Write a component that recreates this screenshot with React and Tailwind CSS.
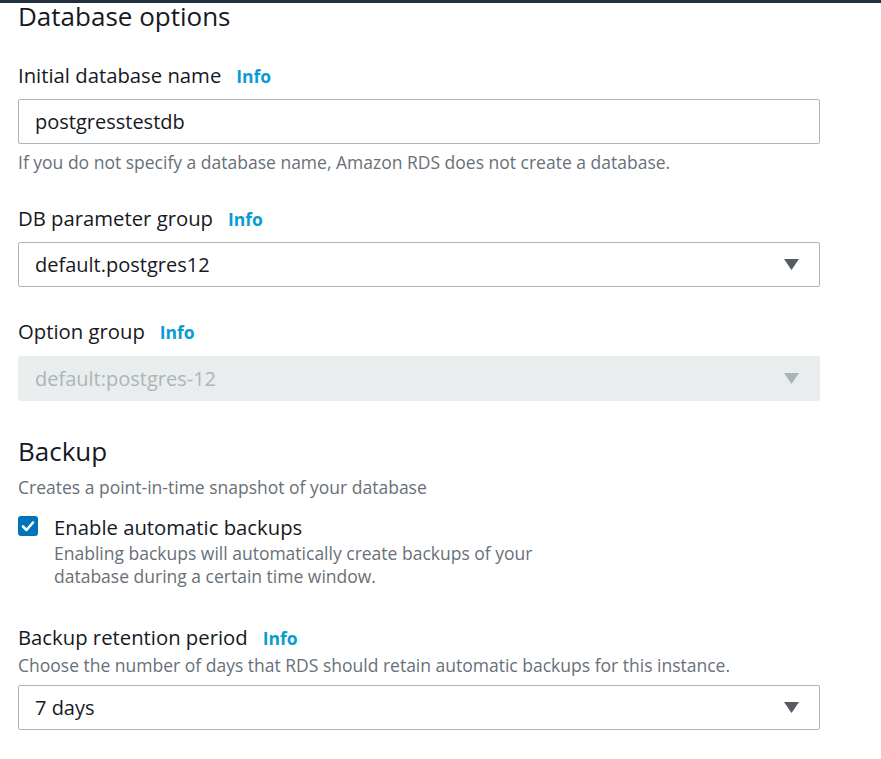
import React from 'react';

const font = { fontFamily: '"Open Sans", "Noto Sans", Arial, sans-serif' };

function Info() {
  return <span className="ml-[15px] text-[17.5px] font-bold text-[#0a9bd3]">Info</span>;
}

function Label({ children, className = '' }) {
  return (
    <div className={`flex items-baseline text-[20.3px] leading-[24px] text-[#16191f] ${className}`}>
      <span>{children}</span>
      <Info />
    </div>
  );
}

function Caret({ disabled }) {
  return (
    <svg width="15" height="11" viewBox="0 0 15 11" className="shrink-0">
      <path d="M0 0 H15 L7.5 11 Z" fill={disabled ? '#a9b4b6' : '#545b64'} />
    </svg>
  );
}

function Select({ value, disabled }) {
  return (
    <div
      className={`flex h-[45px] items-center justify-between rounded-[2px] border pl-[16px] pr-[20px] text-[20px] ${
        disabled
          ? 'border-[#eaeded] bg-[#eaeded] text-[#aab7b8]'
          : 'border-[#aab7b8] bg-white text-[#16191f]'
      }`}
    >
      <span>{value}</span>
      <Caret disabled={disabled} />
    </div>
  );
}

export default function App() {
  return (
    <div className="min-h-[759px] w-[881px] bg-white" style={font}>
      <div className="h-[3px] bg-[#232f3e]" />
      <div className="w-[820px] pl-[18px]">
        <h2 className="-mt-[2px] text-[26px] leading-[30px] text-[#16191f]">Database options</h2>

        <Label className="mt-[32px]">Initial database name</Label>
        <div className="mt-[11px] flex h-[45px] items-center rounded-[2px] border border-[#aab7b8] pl-[16px] text-[20px] text-[#16191f]">
          postgresstestdb
        </div>
        <p className="mt-[6px] text-[17.5px] leading-[24px] text-[#687078]">
          If you do not specify a database name, Amazon RDS does not create a database.
        </p>

        <Label className="mt-[32px]">DB parameter group</Label>
        <div className="mt-[11px]">
          <Select value="default.postgres12" />
        </div>

        <Label className="mt-[32px]">Option group</Label>
        <div className="mt-[12px]">
          <Select value="default:postgres-12" disabled />
        </div>

        <h2 className="mt-[35px] text-[26px] leading-[30px] text-[#16191f]">Backup</h2>
        <p className="mt-[9px] text-[17.5px] leading-[24px] text-[#687078]">
          Creates a point-in-time snapshot of your database
        </p>

        <div className="mt-[16px] flex items-start">
          <div className="mt-[1px] flex h-[20px] w-[20px] items-center justify-center rounded-[3px] bg-[#0073bb]">
            <svg width="14" height="12" viewBox="0 0 14 12">
              <path d="M2 6.5 L5.5 10 L12 2.5" fill="none" stroke="white" strokeWidth="2.6" strokeLinecap="round" strokeLinejoin="round" />
            </svg>
          </div>
          <div className="ml-[16px]">
            <div className="text-[20.3px] leading-[24px] text-[#16191f]">Enable automatic backups</div>
            <p className="mt-[3px] w-[520px] text-[17.5px] leading-[23px] text-[#687078]">
              Enabling backups will automatically create backups of your database during a certain time window.
            </p>
          </div>
        </div>

        <Label className="mt-[37px]">Backup retention period</Label>
        <p className="mt-[3px] text-[17.5px] leading-[24px] text-[#687078]">
          Choose the number of days that RDS should retain automatic backups for this instance.
        </p>
        <div className="mt-[8px]">
          <Select value="7 days" />
        </div>
      </div>
    </div>
  );
}
